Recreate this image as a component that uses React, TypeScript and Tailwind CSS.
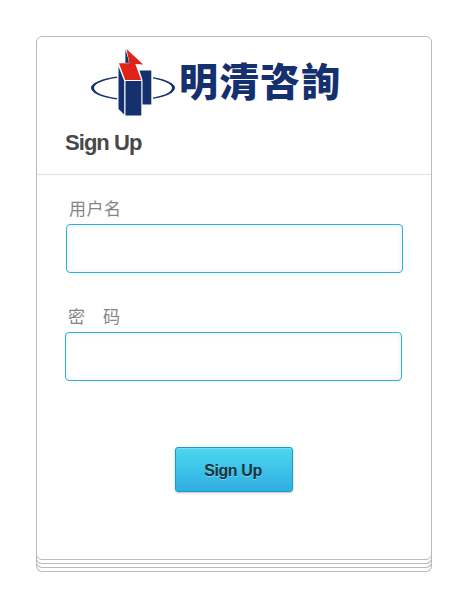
import React from 'react';

function LogoMark() {
  return (
    <svg width="260" height="72" viewBox="88 46 260 72" className="block">
      <path fillRule="evenodd" fill="#15306f" d="M91 88a42 12.5 0 1 0 84 0a42 12.5 0 1 0 -84 0M94 88a39 11.1 0 1 0 78 0a39 11.1 0 1 0 -78 0" />
      <path d="M118 63L125 80V116L118 110ZM124 80H142V116H124ZM140 70H152V105H141Z" fill="#fff" stroke="#fff" strokeWidth="2" />
      <path d="M125.4 49.5V63H130ZM118.5 66.5L124.2 81V114.5L118.5 109ZM125.5 81H141.3V115.5H125.5ZM139.5 70.5H151.3V104.5H142.5V80Z" fill="#15306f" />
      <path d="M126.5 49L143.2 64.5L135.3 64L141.2 80H125.2L119 63.3H129.5Z" fill="#df2519" stroke="#fff" strokeWidth="0.8" paintOrder="stroke" />
      <text x="179" y="96" fontSize="39" fontWeight="800" fill="#15306f" textLength="161" lengthAdjust="spacing" className="font-['Noto_Sans_CJK_TC',sans-serif]">明清咨詢</text>
    </svg>
  );
}

function Field({ label, type, className }: { label: string; type: string; className: string }) {
  return (
    <label className={`block ${className}`}>
      <span className="block h-[24px] whitespace-pre pl-[3px] font-['Noto_Sans_CJK_SC',sans-serif] text-[17px] leading-[23px] tracking-[0.5px] text-[#858585]">{label}</span>
      <input type={type} className="mt-[4px] block h-[49px] w-[337px] rounded-[4px] border border-[#2ab0e4] bg-white px-3 shadow-[inset_0_0_6px_rgba(0,0,0,0.07)] outline-none" />
    </label>
  );
}

export default function App() {
  return (
    <main className="h-[608px] w-[468px] overflow-hidden bg-white p-[36px] font-['Liberation_Sans',Arial,sans-serif]">
      <section className="h-[524px] w-[396px] rounded-[6px] border border-[#bbb]">
        <header className="h-[138px] border-b border-[#e0e0e0]">
          <div className="pl-[51px] pt-[9px]"><LogoMark /></div>
          <h1 className="pl-[28px] pt-[10px] text-[22px] leading-[30px] font-bold tracking-[-0.95px] text-[#484848]">Sign Up</h1>
        </header>
        <form className="pt-[21px]">
          <Field label="用户名" type="text" className="ml-[29px]" />
          <Field label="密　码" type="password" className="ml-[28px] mt-[31px]" />
          <button type="button" className="ml-[138px] mt-[66px] block h-[45px] w-[118px] rounded-[3px] border border-[#149bca] bg-linear-to-b from-[#4bd7ef] to-[#30aee2] pr-[2px] pt-[2px] text-[16px] font-bold tracking-[-0.4px] text-[#16343f] shadow-[0_1px_2px_rgba(0,0,0,0.25),inset_0_1px_0_rgba(255,255,255,0.25)] [text-shadow:0_1px_0_rgba(255,255,255,0.35)]">Sign Up</button>
        </form>
      </section>
      <div className="-mt-[6px] h-[10px] w-[396px] rounded-b-[6px] border-x border-b border-[#bbb]" />
      <div className="-mt-[6px] h-[10px] w-[396px] rounded-b-[6px] border-x border-b border-[#bbb]" />
      <div className="-mt-[6px] h-[10px] w-[396px] rounded-b-[6px] border-x border-b border-[#bbb]" />
    </main>
  );
}
